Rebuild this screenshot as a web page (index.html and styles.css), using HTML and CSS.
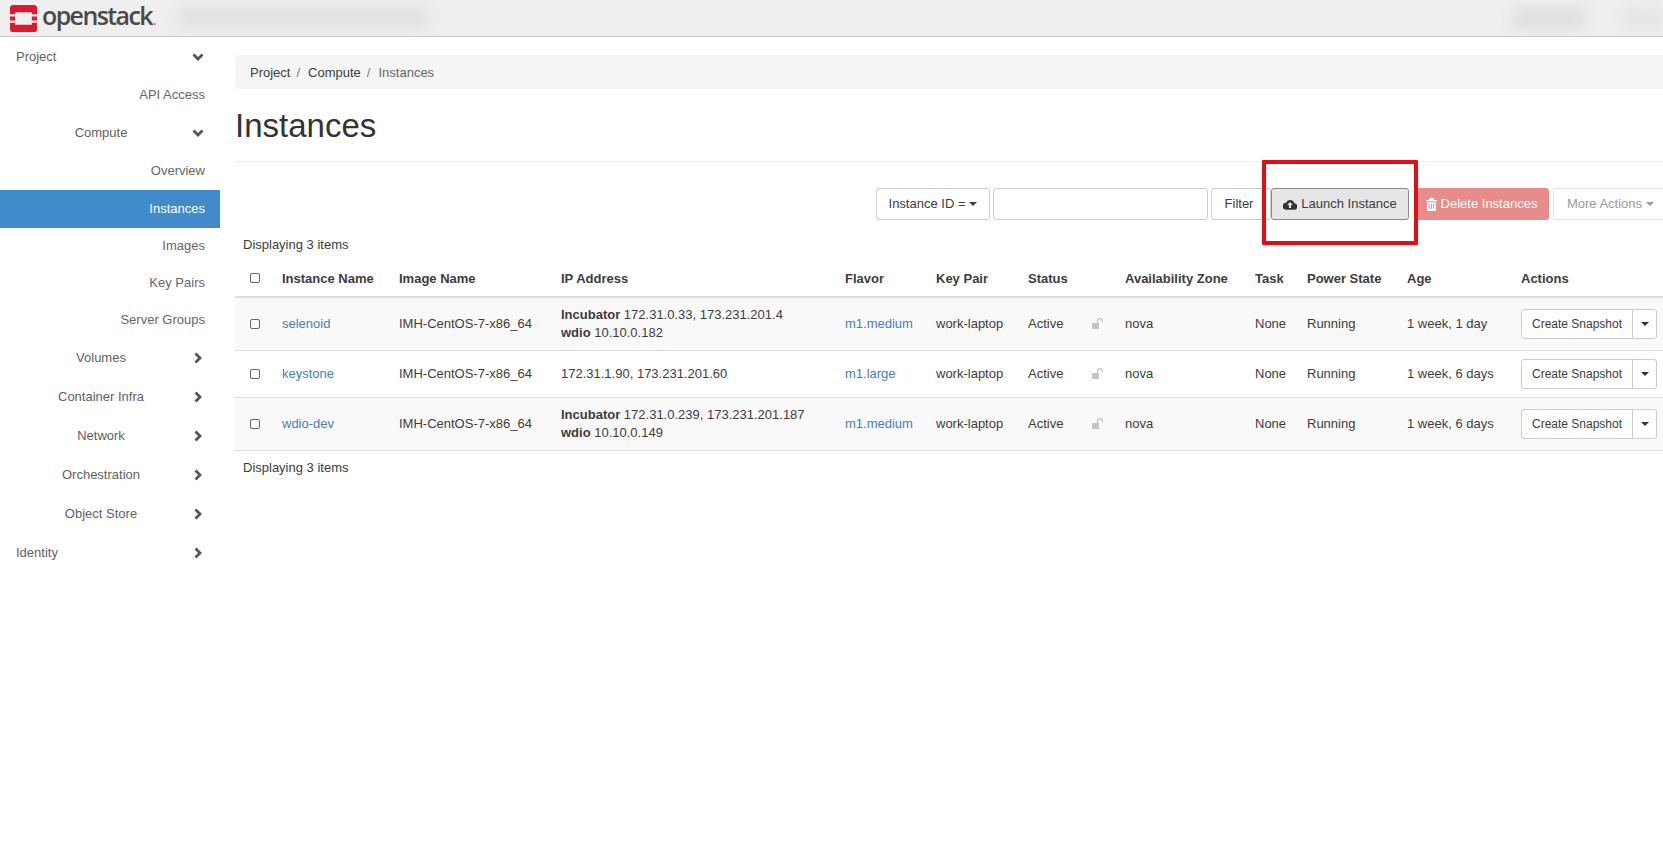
FILE: index.html
```html
<!DOCTYPE html>
<html lang="en">
<head>
<meta charset="utf-8">
<title>Instances</title>
<link rel="stylesheet" href="styles.css">
</head>
<body>
<header class="topbar">
  <div class="brand">
    <svg class="logo" viewBox="0 0 26 26" width="27" height="27" aria-hidden="true">
      <path fill="#da1a32" fill-rule="evenodd" d="M3 0h20a3 3 0 0 1 3 3v6h-5V7H5v2H0V3a3 3 0 0 1 3-3zM0 11h5v4H0zM21 11h5v4h-5zM0 17h5v2h16v-2h5v6a3 3 0 0 1-3 3H3a3 3 0 0 1-3-3z"/>
    </svg>
    <span class="wordmark">openstack<span class="dot">.</span></span>
  </div>
  <div class="smudge smudge-left"></div>
  <div class="smudge-group">
    <div class="smudge smudge-right"></div>
    <div class="smudge smudge-far"></div>
  </div>
</header>
<div class="layout">
  <nav class="sidebar">
    <a class="nav-row root"><span class="nav-label">Project</span><svg class="chev" viewBox="0 0 12 12" width="12" height="12"><path d="M1.500 3.500 6 8l4.500-4.500"/></svg></a>
    <a class="leaf">API Access</a>
    <a class="nav-row"><span class="nav-label">Compute</span><svg class="chev" viewBox="0 0 12 12" width="12" height="12"><path d="M1.500 3.500 6 8l4.500-4.500"/></svg></a>
    <a class="leaf">Overview</a>
    <a class="leaf active">Instances</a>
    <a class="leaf short">Images</a>
    <a class="leaf short">Key Pairs</a>
    <a class="leaf short">Server Groups</a>
    <a class="nav-row"><span class="nav-label">Volumes</span><svg class="chev" viewBox="0 0 12 12" width="12" height="12"><path d="M3.500 1.500 8 6l-4.500 4.500"/></svg></a>
    <a class="nav-row"><span class="nav-label">Container Infra</span><svg class="chev" viewBox="0 0 12 12" width="12" height="12"><path d="M3.500 1.500 8 6l-4.500 4.500"/></svg></a>
    <a class="nav-row"><span class="nav-label">Network</span><svg class="chev" viewBox="0 0 12 12" width="12" height="12"><path d="M3.500 1.500 8 6l-4.500 4.500"/></svg></a>
    <a class="nav-row"><span class="nav-label">Orchestration</span><svg class="chev" viewBox="0 0 12 12" width="12" height="12"><path d="M3.500 1.500 8 6l-4.500 4.500"/></svg></a>
    <a class="nav-row"><span class="nav-label">Object Store</span><svg class="chev" viewBox="0 0 12 12" width="12" height="12"><path d="M3.500 1.500 8 6l-4.500 4.500"/></svg></a>
    <a class="nav-row root"><span class="nav-label">Identity</span><svg class="chev" viewBox="0 0 12 12" width="12" height="12"><path d="M3.500 1.500 8 6l-4.500 4.500"/></svg></a>
  </nav>
  <main class="content">
    <ol class="breadcrumb">
      <li>Project</li><li>Compute</li><li class="current">Instances</li>
    </ol>
    <h1 class="title">Instances</h1>
    <div class="toolbar">
      <button class="btn select">Instance ID = <i class="caret"></i></button>
      <input class="search" type="text" aria-label="Filter">
      <button class="btn filter">Filter</button>
      <div class="callout-anchor">
        <button class="btn launch">
          <svg class="ico" viewBox="0 0 16 12" width="14" height="11" aria-hidden="true"><path fill="#333" fill-rule="evenodd" d="M12.900 4.600A5 5 0 0 0 3.400 4 3.800 3.800 0 0 0 3.800 12h8.700a3.700 3.700 0 0 0 .4-7.400zM8 3l3.300 3.500H9.200V10H6.800V6.500H4.700z"/></svg>
          Launch Instance
        </button>
        <div class="callout"></div>
      </div>
      <button class="btn delete">
        <svg class="ico" viewBox="0 0 12 14" width="11" height="13" aria-hidden="true"><path fill="#fff" fill-rule="evenodd" d="M4 0h4l1 2h3v1.500H0V2h3zM1 4.500h10V13a1 1 0 0 1-1 1H2a1 1 0 0 1-1-1zM3 6v6h1V6zM5.500 6v6h1V6zM8 6v6h1V6z"/></svg>
        Delete Instances
      </button>
      <button class="btn more">More Actions <i class="caret"></i></button>
    </div>
    <div class="count">Displaying 3 items</div>
    <table class="instances">
      <colgroup>
        <col class="c-check"><col class="c-name"><col class="c-image"><col class="c-ip"><col class="c-flavor"><col class="c-key"><col class="c-status"><col class="c-lock"><col class="c-zone"><col class="c-task"><col class="c-power"><col class="c-age"><col class="c-actions">
      </colgroup>
      <thead>
        <tr>
          <th class="check"><span class="box"></span></th>
          <th>Instance Name</th><th>Image Name</th><th>IP Address</th><th>Flavor</th><th>Key Pair</th><th>Status</th><th></th><th>Availability Zone</th><th>Task</th><th>Power State</th><th>Age</th><th>Actions</th>
        </tr>
      </thead>
      <tbody>
        <tr class="tall">
          <td class="check"><span class="box"></span></td>
          <td><a class="link">selenoid</a></td>
          <td>IMH-CentOS-7-x86_64</td>
          <td><b>Incubator</b> 172.31.0.33, 173.231.201.4<br><b>wdio</b> 10.10.0.182</td>
          <td><a class="link">m1.medium</a></td>
          <td>work-laptop</td><td>Active</td>
          <td><svg class="lock" viewBox="0 0 12 11" width="12" height="11" aria-hidden="true"><path fill="#c4c4c4" d="M0 5h7v6H0z"/><path fill="none" stroke="#c4c4c4" stroke-width="1.300" d="M5.500 5V3a2.400 2.400 0 0 1 4.800 0v1.500"/></svg></td>
          <td>nova</td><td>None</td><td>Running</td><td>1 week, 1 day</td>
          <td><div class="split"><button class="btn snap">Create Snapshot</button><button class="btn drop"><i class="caret dark"></i></button></div></td>
        </tr>
        <tr class="short-row">
          <td class="check"><span class="box"></span></td>
          <td><a class="link">keystone</a></td>
          <td>IMH-CentOS-7-x86_64</td>
          <td>172.31.1.90, 173.231.201.60</td>
          <td><a class="link">m1.large</a></td>
          <td>work-laptop</td><td>Active</td>
          <td><svg class="lock" viewBox="0 0 12 11" width="12" height="11" aria-hidden="true"><path fill="#c4c4c4" d="M0 5h7v6H0z"/><path fill="none" stroke="#c4c4c4" stroke-width="1.300" d="M5.500 5V3a2.400 2.400 0 0 1 4.800 0v1.500"/></svg></td>
          <td>nova</td><td>None</td><td>Running</td><td>1 week, 6 days</td>
          <td><div class="split"><button class="btn snap">Create Snapshot</button><button class="btn drop"><i class="caret dark"></i></button></div></td>
        </tr>
        <tr class="tall">
          <td class="check"><span class="box"></span></td>
          <td><a class="link">wdio-dev</a></td>
          <td>IMH-CentOS-7-x86_64</td>
          <td><b>Incubator</b> 172.31.0.239, 173.231.201.187<br><b>wdio</b> 10.10.0.149</td>
          <td><a class="link">m1.medium</a></td>
          <td>work-laptop</td><td>Active</td>
          <td><svg class="lock" viewBox="0 0 12 11" width="12" height="11" aria-hidden="true"><path fill="#c4c4c4" d="M0 5h7v6H0z"/><path fill="none" stroke="#c4c4c4" stroke-width="1.300" d="M5.500 5V3a2.400 2.400 0 0 1 4.800 0v1.500"/></svg></td>
          <td>nova</td><td>None</td><td>Running</td><td>1 week, 6 days</td>
          <td><div class="split"><button class="btn snap">Create Snapshot</button><button class="btn drop"><i class="caret dark"></i></button></div></td>
        </tr>
      </tbody>
    </table>
    <div class="count count-bottom">Displaying 3 items</div>
  </main>
</div>
</body>
</html>
```
FILE: styles.css
```css
* { box-sizing: border-box; }
html, body { height: 100%; }
body {
  margin: 0;
  overflow: hidden;
  background: #fff;
  color: #3c3c3c;
  font-family: "Liberation Sans", Arial, sans-serif;
  font-size: 13px;
  line-height: 18px;
}

/* top bar */
.topbar {
  height: 37px;
  display: flex;
  align-items: center;
  background: #efefef;
  border-bottom: 1px solid #c6c6c6;
}
.brand { display: flex; align-items: center; width: 172px; padding-left: 10px; flex: none; }
.logo { flex: none; }
.wordmark {
  margin-left: 5px;
  font-family: "Open Sans", sans-serif;
  font-size: 25px;
  font-weight: 600;
  line-height: 34px;
  letter-spacing: -1.600px;
  color: #4a4a4a;
}
.dot { font-size: 12px; letter-spacing: 0; color: #777; margin-left: 1px; }
.smudge { height: 23px; background: #e2e2e2; filter: blur(6px); flex: none; }
.smudge-left { width: 250px; margin-left: 6px; }
.smudge-group { margin-left: auto; display: flex; gap: 38px; }
.smudge-right { width: 72px; background: #e0e0e0; }
.smudge-far { width: 40px; background: #e6e6e6; }

.layout { display: flex; }

/* sidebar */
.sidebar { width: 220px; flex: none; color: #5f5f5f; }
.nav-row, .leaf { display: flex; align-items: center; height: 39px; }
.nav-row { padding-right: 16px; }
.nav-label { flex: 1; text-align: center; padding-left: 10px; }
.root .nav-label { text-align: left; padding: 0 0 0 16px; }
.leaf { justify-content: flex-end; height: 37.500px; padding-right: 15px; color: #666; }
.short { height: 36.800px; }
.active { height: 38px; background: #428bca; color: #fff; }
.chev { flex: none; }
.chev path { fill: none; stroke: #555; stroke-width: 2.800; }

/* content */
.content { width: 1443px; padding: 18px 0 0 15px; flex: none; }
.breadcrumb {
  list-style: none;
  display: flex;
  align-items: center;
  height: 34px;
  margin: 0;
  padding: 1px 0 0 15px;
  background: #f5f5f5;
  border-radius: 4px 0 0 4px;
}
.breadcrumb li + li { margin-left: 7px; }
.breadcrumb li:not(.current)::after { content: "/"; margin-left: 6px; margin-right: 1px; color: #777; }
.current { color: #666; }
.title {
  margin: 0;
  padding: 19px 0 0;
  height: 73px;
  font-size: 33px;
  font-weight: 400;
  line-height: 36px;
  color: #333;
  border-bottom: 1px solid #eeeeee;
}

.toolbar { display: flex; align-items: stretch; height: 32px; margin-top: 26px; padding-left: 641px; }
.btn {
  display: inline-flex;
  flex: none;
  align-items: center;
  justify-content: center;
  height: 100%;
  margin: 0;
  padding: 0;
  border: 1px solid #ccc;
  border-radius: 3px;
  background: #fff;
  color: #3c3c3c;
  font: inherit;
  white-space: nowrap;
}
.select { width: 114px; gap: 4px; }
.search { flex: none; width: 215px; margin-left: 3px; border: 1px solid #ccc; border-radius: 3px; padding: 0; background: #fff; }
.filter { width: 60px; margin-left: 3px; padding-right: 4px; }
.callout-anchor { position: relative; width: 138px; flex: none; }
.launch { width: 138px; background: #e6e6e6; border-color: #8c8c8c; gap: 4px; }
.callout {
  position: absolute;
  left: -9px;
  top: -28px;
  width: 156px;
  height: 85px;
  border: 4px solid #e30e13;
  border-radius: 1px;
}
.delete { width: 135px; margin-left: 5px; background: #e68d8b; border-color: #e68d8b; color: #fff; gap: 4px; }
.more { width: 115px; margin-left: 4px; border-color: #e0e0e0; color: #999; gap: 4px; }
.ico { flex: none; }
.caret {
  display: inline-block;
  width: 0;
  height: 0;
  border-top: 4px solid currentColor;
  border-left: 4px solid transparent;
  border-right: 4px solid transparent;
}

.count { height: 18px; margin-top: 16px; padding-left: 8px; }
.count-bottom { margin-top: 8px; }

/* table */
.instances { width: 1428px; table-layout: fixed; border-collapse: collapse; margin-top: 6px; }
.c-check { width: 39px; }
.c-name { width: 117px; }
.c-image { width: 162px; }
.c-ip { width: 284px; }
.c-flavor { width: 91px; }
.c-key { width: 92px; }
.c-status { width: 63px; }
.c-lock { width: 34px; }
.c-zone { width: 130px; }
.c-task { width: 52px; }
.c-power { width: 100px; }
.c-age { width: 114px; }
.c-actions { width: 150px; }
.instances th {
  height: 37px;
  padding: 1px 8px 0;
  text-align: left;
  font-weight: 700;
  white-space: nowrap;
  border-bottom: 2px solid #ddd;
}
.instances td {
  padding: 0 8px;
  white-space: nowrap;
  vertical-align: middle;
  border-bottom: 1px solid #ddd;
}
.tall { height: 53px; }
.short-row { height: 47px; }
.tall td { background: #f9f9f9; }
.instances .check { padding: 0 0 0 15px; }
.box {
  display: block;
  width: 10px;
  height: 10px;
  border: 1px solid #666;
  border-radius: 2px;
  background: #fff;
}
.link { color: #4580b5; }
.instances .lock { display: block; margin-left: 1px; }
.split { display: flex; height: 30px; width: 136px; }
.snap { width: 112px; background: #fff; border-radius: 3px 0 0 3px; font-size: 12px; }
.drop { width: 25px; margin-left: -1px; background: #fff; border-radius: 0 3px 3px 0; }
.dark { color: #333; }
```
